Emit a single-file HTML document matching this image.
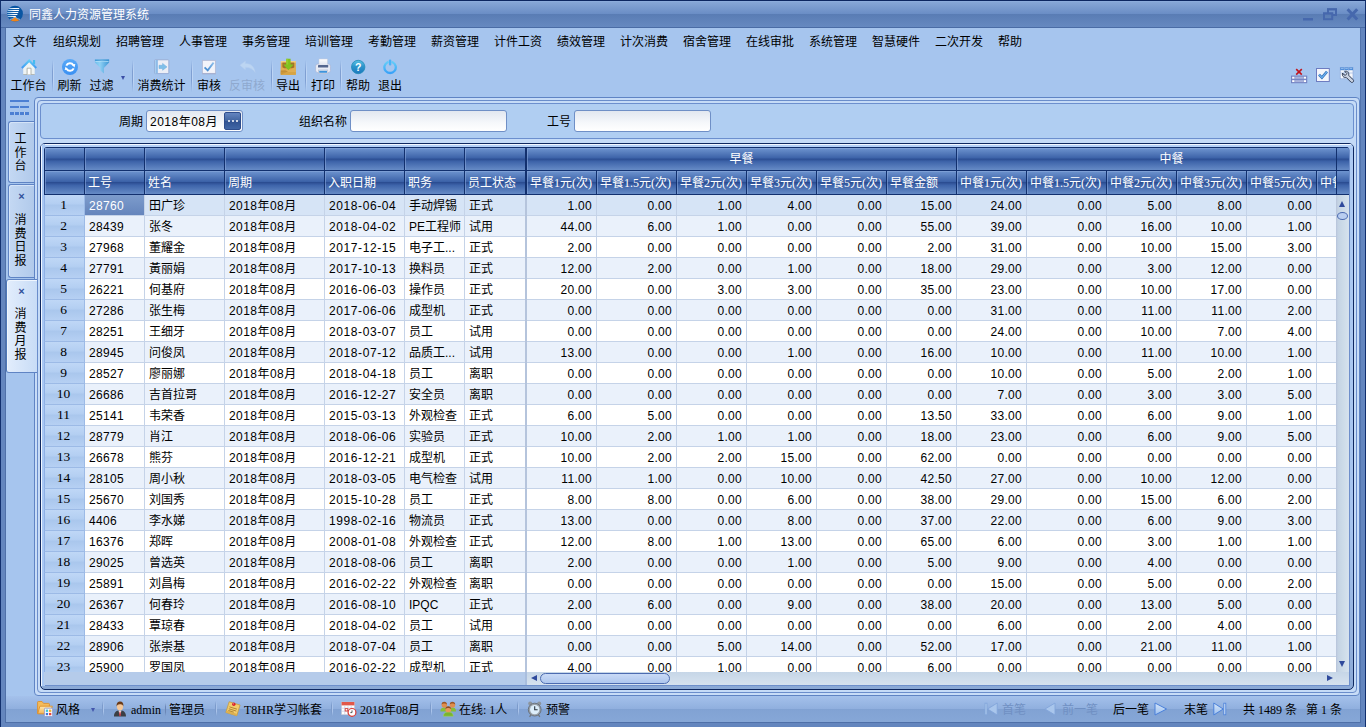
<!DOCTYPE html><html lang="zh-CN"><head><meta charset="utf-8"><title>同鑫人力资源管理系统</title><style>*{box-sizing:border-box;margin:0;padding:0}
html,body{width:1366px;height:727px;overflow:hidden;background:#6486BE}
body{font-family:"Liberation Sans","Noto Sans CJK SC",sans-serif;font-size:12px;color:#000;position:relative}
i,em,b,s,u,q{font-style:normal;font-weight:normal;text-decoration:none}
#win{position:absolute;left:0;top:0;width:1366px;height:727px;background:#6486BE;border-left:1px solid #12306E;border-right:1px solid #12306E;border-top:1px solid #0C2660;overflow:hidden}
#title{position:absolute;left:0;top:0;width:1364px;height:27px;background:linear-gradient(#92B2E1 0,#86A6D6 1px,#6A8DC5 13px,#597CB4 13px,#6689C0 26px,#4A6CA5 26px,#4A6CA5 27px)}
#title .logo{position:absolute;left:6px;top:4px;width:17px;height:18px}
#title .tt{position:absolute;left:28px;top:1px;height:27px;line-height:26px;color:#fff;font-size:12px;white-space:nowrap}
#title .wc{position:absolute;left:1296px;top:5px;width:64px;height:18px}
#client{position:absolute;left:4px;top:27px;width:1356px;height:695px;background:#A6C5EE;border-left:1px solid #4F70A8;border-right:1px solid #5274AD}
#client>*{position:absolute}
#menu{left:0;top:0;width:1354px;height:26px}
#menu span{position:absolute;top:1px;height:26px;line-height:26px;white-space:nowrap;margin-left:0}
#tb{left:0;top:0;width:1354px;height:69px;pointer-events:none}
#tb>*{position:absolute}
.ti{display:block;width:18px;height:18px}
.tl{top:50px;width:60px;height:16px;line-height:16px;white-space:nowrap;text-align:center}
.tl.dis{color:#8FA9CF}
#tb s{top:32px;width:2px;height:32px;background:linear-gradient(90deg,#7F9FD2 0,#7F9FD2 1px,#BDD5F5 1px);-webkit-mask-image:linear-gradient(transparent,#000 35%,#000 65%,transparent);mask-image:linear-gradient(transparent,#000 35%,#000 65%,transparent)}
.dd{width:0;height:0;border-left:2.5px solid transparent;border-right:2.5px solid transparent;border-top:4px solid #3B4FA6;margin-top:-.5px}
.dd2{position:absolute;top:12px;width:0;height:0;border-left:2.5px solid transparent;border-right:2.5px solid transparent;border-top:4px solid #4356AC}
.ri{width:18px;height:18px}
#side{left:0;top:0;width:28px;height:667px}
#side>*{position:absolute}
.ham{left:4px;top:72px;width:19px;height:15px}
.ham u{position:absolute;background:#4B7FD3;height:2px}
.ham u:nth-child(1){left:0;top:0;width:19px;height:2px}
.ham u.l2{left:0;top:6px;width:9px}
.ham u.l2.b{left:10px}
.ham u.l3{top:12px;width:4px;height:3px}
.ham u.l3.a{left:0}.ham u.l3.b{left:5px}.ham u.l3.c{left:10px}.ham u.l3.d{left:15px}
.stab{left:2px;width:26px;border:1px solid #5F84C4;border-right:0;border-radius:3px 0 0 3px;background:linear-gradient(90deg,#C4D8F3,#B1CAEB);box-shadow:inset 1px 1px 0 #D5E4F8}
.stab.act{left:0;width:31px;background:linear-gradient(90deg,#E2EDFC,#C8DCF6);border-color:#5F84C4;border-left-color:#4F78B8;box-shadow:inset 1px 1px 0 #F0F6FE;border-right:0;border-radius:3px 0 0 3px;z-index:5}
.stab span{position:absolute;left:0;width:23px;text-align:center;line-height:13.5px;font-size:12px}
.stab.act span{left:2px}
.stab em{position:absolute;left:1px;top:6px;width:23px;text-align:center;font-size:11px;line-height:10px;color:#2F4F9A;font-weight:bold}
.stab.act em{left:3px}
#p1{left:28px;top:69px;width:1326px;height:599px;border:1px solid #5F84C4;border-radius:4px;background:#C7DCF7}
#p2{position:absolute;left:2px;top:2px;width:1320px;height:593px;border:1px solid #6A8DCB;border-radius:4px;background:#C5DBF7}
#fp{position:absolute;left:2px;top:2px;width:1314px;height:36px;border:1px solid #6C8FCE;border-radius:4px;background:#B0CEF2}
#fp label{position:absolute;top:8px;margin-left:0;height:21px;line-height:21px;white-space:nowrap}
.inp{position:absolute;top:6px;height:22px;border:1px solid #6F8FC6;border-radius:3px;background:linear-gradient(#E2E7F0,#F6F8FB 60%,#fff)}
.inp span{position:absolute;left:3px;top:1px;line-height:20px;white-space:nowrap;letter-spacing:.5px}
.eb{position:absolute;right:1px;top:1px;width:17px;height:18px;border:1px solid #2E4D8C;border-radius:2px;background:linear-gradient(#6485C0,#41649F 50%,#2F5190 50%,#4167A6)}
.eb q{position:absolute;top:7px;width:2px;height:2px;background:#fff;border-radius:1px}
.eb q:nth-child(1){left:3px}.eb q:nth-child(2){left:7px}.eb q:nth-child(3){left:11px}
#gb{position:absolute;left:2px;top:42px;width:1314px;height:547px;border:1px solid #0F2860;border-radius:5px;background:linear-gradient(#AECBF3 0,#A5C3EE 70%,#8BA9D6 100%);overflow:hidden}
#gb:before{content:"";position:absolute;left:0;top:0;width:1312px;height:3px;background:#B4D0F7;border-top:1px solid #F2F7FE}
#gb:after{content:"";position:absolute;left:0;top:0;width:3px;height:542px;background:#A9C8F4;border-left:1px solid #F2F7FE}
#gi{position:absolute;left:3px;top:3px;width:1305px;height:538px;background:#B7CDEB;overflow:hidden;z-index:2;border-radius:3px 3px 0 0;box-shadow:1px 1px 0 #6E8FCB}
#hd{position:absolute;left:0;top:0;width:1305px;height:48px;background:#12306E;overflow:hidden;font-family:"Liberation Serif","Noto Sans CJK SC",serif}
.h{position:absolute;color:#fff;overflow:hidden;white-space:nowrap;background:linear-gradient(#6E94CF 0,#3C62A8 46%,#2B4D92 50%,#3E64AA 62%,#668BC6 100%);box-shadow:inset 1px 1px 0 rgba(140,170,220,.55)}
.h span{position:absolute;left:3px;top:0;line-height:24px;font-size:12px}
.h.hc{text-align:center;line-height:23px;font-size:12px}
.fx{position:absolute;width:2px;background:#12306E}
.hcorner{position:absolute;left:1292px;top:0;width:13px;height:48px;background:#12306E}
.hcorner b{position:absolute;left:1px;width:12px;display:block;background:linear-gradient(#6E94CF 0,#3C62A8 46%,#2B4D92 50%,#3E64AA 62%,#668BC6 100%)}
#bd{position:absolute;left:0;top:48px;width:1292px;height:477px;background:#fff;overflow:hidden}
.r{position:absolute;left:0;width:1343px;height:21px;background:#fff}
.r.alt{background:#EAF1FB}
.r.sel{background:#D6E4F6}
.r>div{position:absolute;top:0;height:21px;line-height:22px;border-bottom:1px solid #C5D3E8;white-space:nowrap;overflow:hidden}
.c{padding-left:4px;border-right:0;box-shadow:1px 0 0 #C5D3E8}
.r>.c{overflow:visible}
.c.n{text-align:right;padding-right:4px;padding-left:0;letter-spacing:.3px}
.c.d{letter-spacing:.3px}
.c.dt{letter-spacing:.6px}
.c.pd{letter-spacing:.45px}
.ind{text-align:center;padding-right:2px;font-family:"Liberation Serif",serif;font-size:13.5px;line-height:19px !important;background:linear-gradient(#BFD7F6 0,#B4CFF2 42%,#AAC7ED 52%,#B6D0F3 100%);border-bottom:1px solid #9CBAE6 !important;border-left:1px solid #8EB0E6;box-shadow:1px 0 0 #9CBAE6}
.c.foc{background:linear-gradient(#7D9CCC,#6585BC);color:#fff}
.fx2{position:absolute;top:0;width:2px;height:477px;background:#B5C4DC}
#vs{position:absolute;left:1292px;top:48px;width:13px;height:477px;background:linear-gradient(90deg,#B7C3DA 0,#C4D3E4 2px,#CBDAE8 50%,#D6E2EE 100%)}
#vs i{position:absolute;display:block}
#vs .up{left:3px;top:6px;width:0;height:0;border-left:3.5px solid transparent;border-right:3.5px solid transparent;border-bottom:6px solid #2F4A9C}
#vs .dn{left:3px;top:466px;width:0;height:0;border-left:3.5px solid transparent;border-right:3.5px solid transparent;border-top:6px solid #2F4A9C}
#vs .th{left:1px;top:17px;width:11px;height:8px;border:1px solid #4C6BB0;border-radius:50%;background:#B9CEF0}
#hs{position:absolute;left:0;top:525px;width:1305px;height:13px;background:linear-gradient(#C6D6E7,#D6E2EF)}
#hs .hl{position:absolute;left:0;top:0;width:483px;height:13px;background:#B5CBEA;border-right:2px solid #A9BEDE}
#hs .tr{position:absolute;left:483px;top:0;width:810px;height:13px}
#hs i{position:absolute;display:block}
#hs .lf{left:4px;top:3px;width:0;height:0;border-top:3.5px solid transparent;border-bottom:3.5px solid transparent;border-right:6px solid #2F4A9C}
#hs .rt{left:800px;top:3px;width:0;height:0;border-top:3.5px solid transparent;border-bottom:3.5px solid transparent;border-left:6px solid #2F4A9C}
#hs .hth{left:13px;top:1px;width:130px;height:11px;border:1px solid #4C6BB0;border-radius:6px;background:linear-gradient(#C9DAF6,#AFC7EE)}
#sb{left:0;top:668px;width:1354px;height:27px;background:linear-gradient(#A4C1EB 0,#90AFDE 13px,#81A2D3 13px,#86A7D7 26px,#4F70A8 26px);font-family:"Liberation Serif","Noto Sans CJK SC",serif}
#sb>*{position:absolute}
.si{top:0;height:26px}
.si i{position:absolute;left:0;top:5px;width:16px;height:16px;display:block}
.si span{position:absolute;top:2px;line-height:25px;white-space:nowrap;font-size:12px}
.si span.dis{color:#7090C3}
#sb s{top:5px;width:2px;height:15px;background:linear-gradient(90deg,#7B9ACB 0,#7B9ACB 1px,#A9C3EA 1px);-webkit-mask-image:linear-gradient(transparent,#000 30%,#000 70%,transparent);mask-image:linear-gradient(transparent,#000 30%,#000 70%,transparent)}
#sb s.t{width:1px;background:#6B86B5;top:7px;height:13px}
svg{display:block}
q:before,q:after{content:none}
</style></head><body><div id="win"><div id="title"><div class="logo"><svg width="17" height="18" viewBox="0 0 17 18"><defs><clipPath id="lgc"><circle cx="8" cy="8.6" r="7.9"/></clipPath><clipPath id="lgs"><path d="M0,1 L12.3,1 C12.6,6 10.6,10.4 7.6,12.6 L0,13.5 Z"/></clipPath><linearGradient id="lgg" x1="0" x2="1" y1="0" y2="0"><stop offset="0" stop-color="#7FB6E6"/><stop offset=".55" stop-color="#fff"/></linearGradient></defs><g clip-path="url(#lgc)"><rect width="17" height="18" fill="#0A56A3"/><g clip-path="url(#lgs)" fill="url(#lgg)"><rect x="0" y="3" width="13" height="1.05"/><rect x="0" y="5" width="13" height="1.05"/><rect x="0" y="7" width="13" height="1.05"/><rect x="0" y="9" width="13" height="1.05"/><rect x="0" y="11" width="13" height="1.05"/></g><path d="M3,15.6 Q5.8,14.6 8,12 Q10.2,14.6 13,15.6 Q8,18.6 3,15.6Z" fill="#F0841A"/><path d="M2.6,14.6 Q6,14 8,11.8 Q10,14 13.4,14.6" fill="none" stroke="#fff" stroke-width=".7" opacity=".8"/></g></svg></div><span class="tt">同鑫人力资源管理系统</span><div class="wc"><svg width="64" height="18" viewBox="0 0 64 18"><rect x="6" y="12" width="10" height="2.5" fill="#4668AD"/><g fill="none" stroke="#4668AD"><path d="M31,7 V3.6 H39 V9 H36" stroke-width="2"/><path d="M30,2.9 H40" stroke-width="1.4"/><rect x="27" y="7.6" width="8.2" height="5.6" stroke-width="2"/><path d="M26,7 H36.2" stroke-width="1.2"/></g><path d="M50.6,3.2 L60.2,13.6 M60.2,3.2 L50.6,13.6" stroke="#4668AD" stroke-width="3" fill="none"/></svg></div></div><div id="client"><div id="menu"><span style="left:7px">文件</span><span style="left:47px">组织规划</span><span style="left:110px">招聘管理</span><span style="left:173px">人事管理</span><span style="left:236px">事务管理</span><span style="left:299px">培训管理</span><span style="left:362px">考勤管理</span><span style="left:425px">薪资管理</span><span style="left:488px">计件工资</span><span style="left:551px">绩效管理</span><span style="left:614px">计次消费</span><span style="left:677px">宿舍管理</span><span style="left:740px">在线审批</span><span style="left:803px">系统管理</span><span style="left:866px">智慧硬件</span><span style="left:929px">二次开发</span><span style="left:992px">帮助</span></div><div id="tb"><i class="ti" style="left:15px;top:31px"><svg width="16" height="16" viewBox="0 0 16 16"><defs><linearGradient id="hr" x1="0" x2="0" y1="0" y2="1"><stop offset="0" stop-color="#66D4F7"/><stop offset="1" stop-color="#3C94F2"/></linearGradient></defs><rect x="12" y="1" width="2.1" height="4.4" fill="#45BCEF"/><path d="M2.2,7 L8.2,1.6 L13.7,7 V15.6 H2.2Z" fill="#EEF3F3"/><path d="M2.2,15.1 H13.7 V15.8 H2.2Z" fill="#A9AA9E"/><path d="M6.1,15.4 V9.2 H10 V15.4" fill="#fff" stroke="#9FA39B" stroke-width=".8"/><path d="M0.1,8.2 L8.2,0.1 L16,8.2 L14.6,9.7 L8.2,3.2 L1.6,9.7Z" fill="url(#hr)"/></svg></i><b class="tl" style="left:-7.5px">工作台</b><i class="ti" style="left:56px;top:31px"><svg width="16" height="16" viewBox="0 0 16 16"><defs><linearGradient id="rf" x1="0" x2="0" y1="0" y2="1"><stop offset="0" stop-color="#58A9F8"/><stop offset="1" stop-color="#3A90F2"/></linearGradient></defs><circle cx="8" cy="8" r="8" fill="url(#rf)"/><g fill="none" stroke="#fff" stroke-width="1.9"><path d="M4.3,6.7 A4,4 0 0 1 11.4,6.2"/><path d="M11.7,9.3 A4,4 0 0 1 4.6,9.9"/></g><path d="M9.6,5.6 L13.3,5 L12.5,8.4Z M6.4,10.5 L2.7,11 L3.5,7.7Z" fill="#fff"/></svg></i><b class="tl" style="left:33.5px">刷新</b><i class="ti" style="left:88px;top:31px"><svg width="16" height="16" viewBox="0 0 16 16"><defs><linearGradient id="fl" x1="0" x2="1" y1="0" y2="0"><stop offset="0" stop-color="#6DBDEB"/><stop offset=".35" stop-color="#8FD0F4"/><stop offset="1" stop-color="#3F98D6"/></linearGradient></defs><path d="M0.9,0.6 H15.1 V3.4 L9.9,9 V14.4 L6.4,11.6 V9 L0.9,3.4Z" fill="url(#fl)"/><path d="M0.9,0.6 H15.1 V1.8 H0.9Z" fill="#3D93D2"/><path d="M1.4,2.6 Q8,1.6 14.6,2.6" stroke="#BFE6FB" stroke-width=".7" fill="none"/></svg></i><b class="tl" style="left:65.5px">过滤</b><i class="ti" style="left:148px;top:31px"><svg width="16" height="16" viewBox="0 0 16 16"><rect x="0.6" y="0.8" width="14.2" height="13.8" rx=".8" fill="#ECEEF6" stroke="#8EA3CE" stroke-width=".8"/><rect x="0.8" y="1" width="3" height="13.4" fill="#86B7E7"/><rect x="1" y="1" width="1.2" height="13.4" fill="#A8CDF0"/><path d="M5,6.3 H8.6 V4.4 L13,7.9 L8.6,11.3 V9.5 H5Z" fill="#7FBFE9" stroke="#6CADDD" stroke-width=".5"/></svg></i><b class="tl" style="left:125.5px">消费统计</b><i class="ti" style="left:195px;top:31px"><svg width="16" height="16" viewBox="0 0 16 16"><defs><linearGradient id="ck" x1="0" x2="1" y1="1" y2="0"><stop offset="0" stop-color="#3F86CC"/><stop offset="1" stop-color="#8FC0EC"/></linearGradient></defs><rect x="1.4" y="1.4" width="13" height="13" fill="#F3F4FA" stroke="#B4BCD6" stroke-width=".9"/><path d="M1.2,14.8 H14.8" stroke="#9CA6C8" stroke-width=".8"/><path d="M3.6,8.4 L6.7,11.4 L12.6,3.6" fill="none" stroke="url(#ck)" stroke-width="1.8"/></svg></i><b class="tl" style="left:173.0px">审核</b><i class="ti" style="left:233px;top:31px"><svg width="17" height="16" viewBox="0 0 17 16"><path d="M0.8,6.2 L6.4,2 V4.6 C11.5,4.4 15.6,7.6 16.2,13.6 C13.8,9.6 10.6,8.2 6.4,8.4 V10.8Z" fill="#BCD5F2" stroke="#B2CDEE" stroke-width=".5"/></svg></i><b class="tl dis" style="left:211.0px">反审核</b><i class="ti" style="left:274px;top:30px"><svg width="17" height="18" viewBox="0 0 17 18"><rect x="0.8" y="3" width="15" height="13.8" rx=".8" fill="#DDA748"/><rect x="0.8" y="3" width="15" height="1.6" fill="#F3CF86"/><rect x="2.4" y="4.6" width="11.8" height="5.6" fill="#A1722A"/><path d="M0.8,9.6 L3,9.6 L5,11.4 H11 L14,9.6 H15.8 V16.8 H0.8Z" fill="#E0AE52"/><path d="M0.8,12.6 L5.2,12.2 L8,13.4 L0.8,16.8Z" fill="#C48F35"/><path d="M0.8,14 H15.8 V16.8 H0.8Z" fill="#D19C3C" opacity=".6"/><path d="M6.2,0.8 H10.6 V6.6 H13.6 L8.4,12.2 L3.2,6.6 H6.2Z" fill="#82C21E"/><path d="M6.2,0.8 H8.2 V6.6 H6.2Z" fill="#95D133" opacity=".7"/></svg></i><b class="tl" style="left:252.0px">导出</b><i class="ti" style="left:309px;top:30px"><svg width="16" height="17" viewBox="0 0 16 17"><defs><linearGradient id="pp" x1="0" x2="0" y1="0" y2="1"><stop offset="0" stop-color="#fff"/><stop offset="1" stop-color="#DDE3EE"/></linearGradient></defs><rect x="0.6" y="6" width="14.8" height="8.6" rx="2.2" fill="#E9EDF6" stroke="#A9B5D5" stroke-width=".7"/><rect x="4" y="1" width="8.4" height="6.4" fill="url(#pp)" stroke="#C5CCDC" stroke-width=".5"/><rect x="3" y="7" width="10.2" height="2.6" rx=".6" fill="#54678F"/><rect x="3.4" y="12" width="9.4" height="3.6" fill="#EEF2F8" stroke="#AAB4CC" stroke-width=".6"/><rect x="4.2" y="12.8" width="7.8" height="2" fill="#3D93DB"/></svg></i><b class="tl" style="left:287.0px">打印</b><i class="ti" style="left:345px;top:31px"><svg width="15" height="16" viewBox="0 0 15 16"><defs><linearGradient id="hp" x1="0" x2="0" y1="0" y2="1"><stop offset="0" stop-color="#5CC2E4"/><stop offset=".45" stop-color="#2C96CC"/><stop offset="1" stop-color="#1B78BE"/></linearGradient></defs><circle cx="7.2" cy="8" r="6.7" fill="url(#hp)" stroke="#1F8AB8" stroke-width=".8"/><text x="7.2" y="11.9" text-anchor="middle" font-family="Liberation Sans,sans-serif" font-weight="bold" font-size="10.5" fill="#fff">?</text></svg></i><b class="tl" style="left:322.0px">帮助</b><i class="ti" style="left:377px;top:31px"><svg width="15" height="16" viewBox="0 0 15 16"><defs><linearGradient id="pw" x1="0" x2="0" y1="0" y2="1"><stop offset="0" stop-color="#62CCF8"/><stop offset="1" stop-color="#38A2F8"/></linearGradient></defs><path d="M4.6,3.2 A5.7,5.7 0 1 0 9.6,3.2" fill="none" stroke="url(#pw)" stroke-width="2.3" stroke-linecap="round"/><rect x="5.9" y="0.4" width="2.4" height="6.2" rx="1.1" fill="#48B4F8"/></svg></i><b class="tl" style="left:354.0px">退出</b><s style="left:46px"></s><s style="left:126px"></s><s style="left:185px"></s><s style="left:265px"></s><s style="left:299px"></s><s style="left:334px"></s><em class="dd" style="left:115px;top:48px"></em><div class="ri" style="left:1285px;top:39px"><svg width="18" height="18" viewBox="0 0 18 18"><path d="M5.2,2.2 L10.8,7.6 M10.8,2.2 L5.2,7.6" stroke="#C0141C" stroke-width="1.6"/><rect x="0.4" y="9" width="15.4" height="6.8" fill="#8E9BCE" stroke="#6F7EBE" stroke-width=".8"/><path d="M0.4,12.4 H15.8" stroke="#6F7EBE" stroke-width=".8"/><g fill="#fff"><rect x="1.2" y="9.8" width="2.2" height="1.8"/><rect x="12.8" y="9.8" width="2.2" height="1.8"/><rect x="1.2" y="13.2" width="2.2" height="1.8"/><rect x="12.8" y="13.2" width="2.2" height="1.8"/></g><g fill="#A9B3DC"><rect x="4.2" y="9.8" width="7.8" height="1.8"/><rect x="4.2" y="13.2" width="7.8" height="1.8"/></g></svg></div><div class="ri" style="left:1309px;top:39px"><svg width="18" height="18" viewBox="0 0 18 18"><rect x="1.5" y="1.5" width="12.8" height="13" fill="#F4F5FB" stroke="#6D7CC0" stroke-width="1"/><path d="M4,7.6 L6.9,10.6 L12,4.6" fill="none" stroke="#2F6DB8" stroke-width="2.6"/><path d="M4,7.6 L6.9,10.6 L12,4.6" fill="none" stroke="#6FB1EE" stroke-width="1.3"/></svg></div><div class="ri" style="left:1333px;top:39px"><svg width="18" height="18" viewBox="0 0 18 18"><rect x="1.2" y="0.4" width="12.8" height="11.4" fill="#F4F7FC" stroke="#8AA4D6" stroke-width=".6"/><rect x="1.2" y="0.4" width="12.8" height="2.8" fill="#4A8AD8"/><path d="M5.4,0.4 V11.8 M9.7,0.4 V11.8 M1.2,6 H14" stroke="#9DB7E2" stroke-width=".7"/><g fill="#9CC4F0"><rect x="2" y="1.2" width="2.6" height=".9"/><rect x="6.2" y="1.2" width="2.6" height=".9"/><rect x="10.6" y="1.2" width="2.6" height=".9"/></g><path d="M3.6,6 C2.6,8.6 4.6,11 7.2,10.4 L11.8,15 C13.2,16.4 15.6,14.4 14.2,12.8 L9.6,8.2 C10.4,5.6 8.2,3.6 5.8,4.4 L7.8,6.6 L6.6,8.2 L5.2,8 Z" fill="#C9D2E2" stroke="#2F3C55" stroke-width="1"/></svg></div></div><div id="side"><div class="ham"><u></u><u class="l2"></u><u class="l2 b"></u><u class="l3 a"></u><u class="l3 b"></u><u class="l3 c"></u><u class="l3 d"></u></div><div class="stab" style="top:93px;height:62px"><span style="top:11px">工<br>作<br>台</span></div><div class="stab" style="top:156px;height:94px"><em>×</em><span style="top:29px">消<br>费<br>日<br>报</span></div><div class="stab act" style="top:251px;height:94px"><em>×</em><span style="top:28px">消<br>费<br>月<br>报</span></div></div><div id="p1"><div id="p2"><div id="fp"><label style="left:78px">周期</label><div class="inp" style="left:105px;width:97px"><span>2018年08月</span><div class="eb"><q></q><q></q><q></q></div></div><label style="left:258px">组织名称</label><div class="inp" style="left:309px;width:157px"></div><label style="left:506px">工号</label><div class="inp" style="left:533px;width:137px"></div></div><div id="gb"><div id="gi"><div id="hd"><div class="h" style="left:1px;top:1px;width:39px;height:22px"></div><div class="h" style="left:41px;top:1px;width:59px;height:22px"></div><div class="h" style="left:101px;top:1px;width:79px;height:22px"></div><div class="h" style="left:181px;top:1px;width:99px;height:22px"></div><div class="h" style="left:281px;top:1px;width:79px;height:22px"></div><div class="h" style="left:361px;top:1px;width:59px;height:22px"></div><div class="h" style="left:421px;top:1px;width:61px;height:22px"></div><div class="h hc" style="left:483px;top:1px;width:429px;height:22px">早餐</div><div class="h hc" style="left:913px;top:1px;width:429px;height:22px">中餐</div><div class="h" style="left:1px;top:24px;width:39px;height:23px"></div><div class="h" style="left:41px;top:24px;width:59px;height:23px"><span>工号</span></div><div class="h" style="left:101px;top:24px;width:79px;height:23px"><span>姓名</span></div><div class="h" style="left:181px;top:24px;width:99px;height:23px"><span>周期</span></div><div class="h" style="left:281px;top:24px;width:79px;height:23px"><span>入职日期</span></div><div class="h" style="left:361px;top:24px;width:59px;height:23px"><span>职务</span></div><div class="h" style="left:421px;top:24px;width:61px;height:23px"><span>员工状态</span></div><div class="h" style="left:483px;top:24px;width:69px;height:23px"><span>早餐1元(次)</span></div><div class="h" style="left:553px;top:24px;width:79px;height:23px"><span>早餐1.5元(次)</span></div><div class="h" style="left:633px;top:24px;width:69px;height:23px"><span>早餐2元(次)</span></div><div class="h" style="left:703px;top:24px;width:69px;height:23px"><span>早餐3元(次)</span></div><div class="h" style="left:773px;top:24px;width:69px;height:23px"><span>早餐5元(次)</span></div><div class="h" style="left:843px;top:24px;width:69px;height:23px"><span>早餐金额</span></div><div class="h" style="left:913px;top:24px;width:69px;height:23px"><span>中餐1元(次)</span></div><div class="h" style="left:983px;top:24px;width:79px;height:23px"><span>中餐1.5元(次)</span></div><div class="h" style="left:1063px;top:24px;width:69px;height:23px"><span>中餐2元(次)</span></div><div class="h" style="left:1133px;top:24px;width:69px;height:23px"><span>中餐3元(次)</span></div><div class="h" style="left:1203px;top:24px;width:69px;height:23px"><span>中餐5元(次)</span></div><div class="h" style="left:1273px;top:24px;width:69px;height:23px"><span>中餐金额</span></div><div class="fx" style="left:481px;top:0;height:48px"></div><div class="hcorner"><b style="top:1px;height:22px"></b><b style="top:24px;height:23px"></b></div></div><div id="bd"><div class="r sel" style="top:0px"><div class="ind" style="left:0;width:40px">1</div><div class="c d foc" style="left:41px;width:59px">28760</div><div class="c" style="left:101px;width:79px">田广珍</div><div class="c pd" style="left:181px;width:99px">2018年08月</div><div class="c dt" style="left:281px;width:79px">2018-06-04</div><div class="c" style="left:361px;width:59px">手动焊锡</div><div class="c" style="left:421px;width:61px">正式</div><div class="c n" style="left:483px;width:69px">1.00</div><div class="c n" style="left:553px;width:79px">0.00</div><div class="c n" style="left:633px;width:69px">1.00</div><div class="c n" style="left:703px;width:69px">4.00</div><div class="c n" style="left:773px;width:69px">0.00</div><div class="c n" style="left:843px;width:69px">15.00</div><div class="c n" style="left:913px;width:69px">24.00</div><div class="c n" style="left:983px;width:79px">0.00</div><div class="c n" style="left:1063px;width:69px">5.00</div><div class="c n" style="left:1133px;width:69px">8.00</div><div class="c n" style="left:1203px;width:69px">0.00</div><div class="c n" style="left:1273px;width:69px"></div></div><div class="r alt" style="top:21px"><div class="ind" style="left:0;width:40px">2</div><div class="c d" style="left:41px;width:59px">28439</div><div class="c" style="left:101px;width:79px">张冬</div><div class="c pd" style="left:181px;width:99px">2018年08月</div><div class="c dt" style="left:281px;width:79px">2018-04-02</div><div class="c" style="left:361px;width:59px">PE工程师</div><div class="c" style="left:421px;width:61px">试用</div><div class="c n" style="left:483px;width:69px">44.00</div><div class="c n" style="left:553px;width:79px">6.00</div><div class="c n" style="left:633px;width:69px">1.00</div><div class="c n" style="left:703px;width:69px">0.00</div><div class="c n" style="left:773px;width:69px">0.00</div><div class="c n" style="left:843px;width:69px">55.00</div><div class="c n" style="left:913px;width:69px">39.00</div><div class="c n" style="left:983px;width:79px">0.00</div><div class="c n" style="left:1063px;width:69px">16.00</div><div class="c n" style="left:1133px;width:69px">10.00</div><div class="c n" style="left:1203px;width:69px">1.00</div><div class="c n" style="left:1273px;width:69px"></div></div><div class="r" style="top:42px"><div class="ind" style="left:0;width:40px">3</div><div class="c d" style="left:41px;width:59px">27968</div><div class="c" style="left:101px;width:79px">董耀金</div><div class="c pd" style="left:181px;width:99px">2018年08月</div><div class="c dt" style="left:281px;width:79px">2017-12-15</div><div class="c" style="left:361px;width:59px">电子工...</div><div class="c" style="left:421px;width:61px">正式</div><div class="c n" style="left:483px;width:69px">2.00</div><div class="c n" style="left:553px;width:79px">0.00</div><div class="c n" style="left:633px;width:69px">0.00</div><div class="c n" style="left:703px;width:69px">0.00</div><div class="c n" style="left:773px;width:69px">0.00</div><div class="c n" style="left:843px;width:69px">2.00</div><div class="c n" style="left:913px;width:69px">31.00</div><div class="c n" style="left:983px;width:79px">0.00</div><div class="c n" style="left:1063px;width:69px">10.00</div><div class="c n" style="left:1133px;width:69px">15.00</div><div class="c n" style="left:1203px;width:69px">3.00</div><div class="c n" style="left:1273px;width:69px"></div></div><div class="r alt" style="top:63px"><div class="ind" style="left:0;width:40px">4</div><div class="c d" style="left:41px;width:59px">27791</div><div class="c" style="left:101px;width:79px">黃丽娟</div><div class="c pd" style="left:181px;width:99px">2018年08月</div><div class="c dt" style="left:281px;width:79px">2017-10-13</div><div class="c" style="left:361px;width:59px">换料员</div><div class="c" style="left:421px;width:61px">正式</div><div class="c n" style="left:483px;width:69px">12.00</div><div class="c n" style="left:553px;width:79px">2.00</div><div class="c n" style="left:633px;width:69px">0.00</div><div class="c n" style="left:703px;width:69px">1.00</div><div class="c n" style="left:773px;width:69px">0.00</div><div class="c n" style="left:843px;width:69px">18.00</div><div class="c n" style="left:913px;width:69px">29.00</div><div class="c n" style="left:983px;width:79px">0.00</div><div class="c n" style="left:1063px;width:69px">3.00</div><div class="c n" style="left:1133px;width:69px">12.00</div><div class="c n" style="left:1203px;width:69px">0.00</div><div class="c n" style="left:1273px;width:69px"></div></div><div class="r" style="top:84px"><div class="ind" style="left:0;width:40px">5</div><div class="c d" style="left:41px;width:59px">26221</div><div class="c" style="left:101px;width:79px">何基府</div><div class="c pd" style="left:181px;width:99px">2018年08月</div><div class="c dt" style="left:281px;width:79px">2016-06-03</div><div class="c" style="left:361px;width:59px">操作员</div><div class="c" style="left:421px;width:61px">正式</div><div class="c n" style="left:483px;width:69px">20.00</div><div class="c n" style="left:553px;width:79px">0.00</div><div class="c n" style="left:633px;width:69px">3.00</div><div class="c n" style="left:703px;width:69px">3.00</div><div class="c n" style="left:773px;width:69px">0.00</div><div class="c n" style="left:843px;width:69px">35.00</div><div class="c n" style="left:913px;width:69px">23.00</div><div class="c n" style="left:983px;width:79px">0.00</div><div class="c n" style="left:1063px;width:69px">10.00</div><div class="c n" style="left:1133px;width:69px">17.00</div><div class="c n" style="left:1203px;width:69px">0.00</div><div class="c n" style="left:1273px;width:69px"></div></div><div class="r alt" style="top:105px"><div class="ind" style="left:0;width:40px">6</div><div class="c d" style="left:41px;width:59px">27286</div><div class="c" style="left:101px;width:79px">张生梅</div><div class="c pd" style="left:181px;width:99px">2018年08月</div><div class="c dt" style="left:281px;width:79px">2017-06-06</div><div class="c" style="left:361px;width:59px">成型机</div><div class="c" style="left:421px;width:61px">正式</div><div class="c n" style="left:483px;width:69px">0.00</div><div class="c n" style="left:553px;width:79px">0.00</div><div class="c n" style="left:633px;width:69px">0.00</div><div class="c n" style="left:703px;width:69px">0.00</div><div class="c n" style="left:773px;width:69px">0.00</div><div class="c n" style="left:843px;width:69px">0.00</div><div class="c n" style="left:913px;width:69px">31.00</div><div class="c n" style="left:983px;width:79px">0.00</div><div class="c n" style="left:1063px;width:69px">11.00</div><div class="c n" style="left:1133px;width:69px">11.00</div><div class="c n" style="left:1203px;width:69px">2.00</div><div class="c n" style="left:1273px;width:69px"></div></div><div class="r" style="top:126px"><div class="ind" style="left:0;width:40px">7</div><div class="c d" style="left:41px;width:59px">28251</div><div class="c" style="left:101px;width:79px">王细牙</div><div class="c pd" style="left:181px;width:99px">2018年08月</div><div class="c dt" style="left:281px;width:79px">2018-03-07</div><div class="c" style="left:361px;width:59px">员工</div><div class="c" style="left:421px;width:61px">试用</div><div class="c n" style="left:483px;width:69px">0.00</div><div class="c n" style="left:553px;width:79px">0.00</div><div class="c n" style="left:633px;width:69px">0.00</div><div class="c n" style="left:703px;width:69px">0.00</div><div class="c n" style="left:773px;width:69px">0.00</div><div class="c n" style="left:843px;width:69px">0.00</div><div class="c n" style="left:913px;width:69px">24.00</div><div class="c n" style="left:983px;width:79px">0.00</div><div class="c n" style="left:1063px;width:69px">10.00</div><div class="c n" style="left:1133px;width:69px">7.00</div><div class="c n" style="left:1203px;width:69px">4.00</div><div class="c n" style="left:1273px;width:69px"></div></div><div class="r alt" style="top:147px"><div class="ind" style="left:0;width:40px">8</div><div class="c d" style="left:41px;width:59px">28945</div><div class="c" style="left:101px;width:79px">问俊凤</div><div class="c pd" style="left:181px;width:99px">2018年08月</div><div class="c dt" style="left:281px;width:79px">2018-07-12</div><div class="c" style="left:361px;width:59px">品质工...</div><div class="c" style="left:421px;width:61px">试用</div><div class="c n" style="left:483px;width:69px">13.00</div><div class="c n" style="left:553px;width:79px">0.00</div><div class="c n" style="left:633px;width:69px">0.00</div><div class="c n" style="left:703px;width:69px">1.00</div><div class="c n" style="left:773px;width:69px">0.00</div><div class="c n" style="left:843px;width:69px">16.00</div><div class="c n" style="left:913px;width:69px">10.00</div><div class="c n" style="left:983px;width:79px">0.00</div><div class="c n" style="left:1063px;width:69px">11.00</div><div class="c n" style="left:1133px;width:69px">10.00</div><div class="c n" style="left:1203px;width:69px">1.00</div><div class="c n" style="left:1273px;width:69px"></div></div><div class="r" style="top:168px"><div class="ind" style="left:0;width:40px">9</div><div class="c d" style="left:41px;width:59px">28527</div><div class="c" style="left:101px;width:79px">廖丽娜</div><div class="c pd" style="left:181px;width:99px">2018年08月</div><div class="c dt" style="left:281px;width:79px">2018-04-18</div><div class="c" style="left:361px;width:59px">员工</div><div class="c" style="left:421px;width:61px">离职</div><div class="c n" style="left:483px;width:69px">0.00</div><div class="c n" style="left:553px;width:79px">0.00</div><div class="c n" style="left:633px;width:69px">0.00</div><div class="c n" style="left:703px;width:69px">0.00</div><div class="c n" style="left:773px;width:69px">0.00</div><div class="c n" style="left:843px;width:69px">0.00</div><div class="c n" style="left:913px;width:69px">10.00</div><div class="c n" style="left:983px;width:79px">0.00</div><div class="c n" style="left:1063px;width:69px">5.00</div><div class="c n" style="left:1133px;width:69px">2.00</div><div class="c n" style="left:1203px;width:69px">1.00</div><div class="c n" style="left:1273px;width:69px"></div></div><div class="r alt" style="top:189px"><div class="ind" style="left:0;width:40px">10</div><div class="c d" style="left:41px;width:59px">26686</div><div class="c" style="left:101px;width:79px">吉首拉哥</div><div class="c pd" style="left:181px;width:99px">2018年08月</div><div class="c dt" style="left:281px;width:79px">2016-12-27</div><div class="c" style="left:361px;width:59px">安全员</div><div class="c" style="left:421px;width:61px">离职</div><div class="c n" style="left:483px;width:69px">0.00</div><div class="c n" style="left:553px;width:79px">0.00</div><div class="c n" style="left:633px;width:69px">0.00</div><div class="c n" style="left:703px;width:69px">0.00</div><div class="c n" style="left:773px;width:69px">0.00</div><div class="c n" style="left:843px;width:69px">0.00</div><div class="c n" style="left:913px;width:69px">7.00</div><div class="c n" style="left:983px;width:79px">0.00</div><div class="c n" style="left:1063px;width:69px">3.00</div><div class="c n" style="left:1133px;width:69px">3.00</div><div class="c n" style="left:1203px;width:69px">5.00</div><div class="c n" style="left:1273px;width:69px"></div></div><div class="r" style="top:210px"><div class="ind" style="left:0;width:40px">11</div><div class="c d" style="left:41px;width:59px">25141</div><div class="c" style="left:101px;width:79px">韦荣香</div><div class="c pd" style="left:181px;width:99px">2018年08月</div><div class="c dt" style="left:281px;width:79px">2015-03-13</div><div class="c" style="left:361px;width:59px">外观检查</div><div class="c" style="left:421px;width:61px">正式</div><div class="c n" style="left:483px;width:69px">6.00</div><div class="c n" style="left:553px;width:79px">5.00</div><div class="c n" style="left:633px;width:69px">0.00</div><div class="c n" style="left:703px;width:69px">0.00</div><div class="c n" style="left:773px;width:69px">0.00</div><div class="c n" style="left:843px;width:69px">13.50</div><div class="c n" style="left:913px;width:69px">33.00</div><div class="c n" style="left:983px;width:79px">0.00</div><div class="c n" style="left:1063px;width:69px">6.00</div><div class="c n" style="left:1133px;width:69px">9.00</div><div class="c n" style="left:1203px;width:69px">1.00</div><div class="c n" style="left:1273px;width:69px"></div></div><div class="r alt" style="top:231px"><div class="ind" style="left:0;width:40px">12</div><div class="c d" style="left:41px;width:59px">28779</div><div class="c" style="left:101px;width:79px">肖江</div><div class="c pd" style="left:181px;width:99px">2018年08月</div><div class="c dt" style="left:281px;width:79px">2018-06-06</div><div class="c" style="left:361px;width:59px">实验员</div><div class="c" style="left:421px;width:61px">正式</div><div class="c n" style="left:483px;width:69px">10.00</div><div class="c n" style="left:553px;width:79px">2.00</div><div class="c n" style="left:633px;width:69px">1.00</div><div class="c n" style="left:703px;width:69px">1.00</div><div class="c n" style="left:773px;width:69px">0.00</div><div class="c n" style="left:843px;width:69px">18.00</div><div class="c n" style="left:913px;width:69px">23.00</div><div class="c n" style="left:983px;width:79px">0.00</div><div class="c n" style="left:1063px;width:69px">6.00</div><div class="c n" style="left:1133px;width:69px">9.00</div><div class="c n" style="left:1203px;width:69px">5.00</div><div class="c n" style="left:1273px;width:69px"></div></div><div class="r" style="top:252px"><div class="ind" style="left:0;width:40px">13</div><div class="c d" style="left:41px;width:59px">26678</div><div class="c" style="left:101px;width:79px">熊芬</div><div class="c pd" style="left:181px;width:99px">2018年08月</div><div class="c dt" style="left:281px;width:79px">2016-12-21</div><div class="c" style="left:361px;width:59px">成型机</div><div class="c" style="left:421px;width:61px">正式</div><div class="c n" style="left:483px;width:69px">10.00</div><div class="c n" style="left:553px;width:79px">2.00</div><div class="c n" style="left:633px;width:69px">2.00</div><div class="c n" style="left:703px;width:69px">15.00</div><div class="c n" style="left:773px;width:69px">0.00</div><div class="c n" style="left:843px;width:69px">62.00</div><div class="c n" style="left:913px;width:69px">0.00</div><div class="c n" style="left:983px;width:79px">0.00</div><div class="c n" style="left:1063px;width:69px">0.00</div><div class="c n" style="left:1133px;width:69px">0.00</div><div class="c n" style="left:1203px;width:69px">0.00</div><div class="c n" style="left:1273px;width:69px"></div></div><div class="r alt" style="top:273px"><div class="ind" style="left:0;width:40px">14</div><div class="c d" style="left:41px;width:59px">28105</div><div class="c" style="left:101px;width:79px">周小秋</div><div class="c pd" style="left:181px;width:99px">2018年08月</div><div class="c dt" style="left:281px;width:79px">2018-03-05</div><div class="c" style="left:361px;width:59px">电气检查</div><div class="c" style="left:421px;width:61px">试用</div><div class="c n" style="left:483px;width:69px">11.00</div><div class="c n" style="left:553px;width:79px">1.00</div><div class="c n" style="left:633px;width:69px">0.00</div><div class="c n" style="left:703px;width:69px">10.00</div><div class="c n" style="left:773px;width:69px">0.00</div><div class="c n" style="left:843px;width:69px">42.50</div><div class="c n" style="left:913px;width:69px">27.00</div><div class="c n" style="left:983px;width:79px">0.00</div><div class="c n" style="left:1063px;width:69px">10.00</div><div class="c n" style="left:1133px;width:69px">12.00</div><div class="c n" style="left:1203px;width:69px">0.00</div><div class="c n" style="left:1273px;width:69px"></div></div><div class="r" style="top:294px"><div class="ind" style="left:0;width:40px">15</div><div class="c d" style="left:41px;width:59px">25670</div><div class="c" style="left:101px;width:79px">刘国秀</div><div class="c pd" style="left:181px;width:99px">2018年08月</div><div class="c dt" style="left:281px;width:79px">2015-10-28</div><div class="c" style="left:361px;width:59px">员工</div><div class="c" style="left:421px;width:61px">正式</div><div class="c n" style="left:483px;width:69px">8.00</div><div class="c n" style="left:553px;width:79px">8.00</div><div class="c n" style="left:633px;width:69px">0.00</div><div class="c n" style="left:703px;width:69px">6.00</div><div class="c n" style="left:773px;width:69px">0.00</div><div class="c n" style="left:843px;width:69px">38.00</div><div class="c n" style="left:913px;width:69px">29.00</div><div class="c n" style="left:983px;width:79px">0.00</div><div class="c n" style="left:1063px;width:69px">15.00</div><div class="c n" style="left:1133px;width:69px">6.00</div><div class="c n" style="left:1203px;width:69px">2.00</div><div class="c n" style="left:1273px;width:69px"></div></div><div class="r alt" style="top:315px"><div class="ind" style="left:0;width:40px">16</div><div class="c d" style="left:41px;width:59px">4406</div><div class="c" style="left:101px;width:79px">李水娣</div><div class="c pd" style="left:181px;width:99px">2018年08月</div><div class="c dt" style="left:281px;width:79px">1998-02-16</div><div class="c" style="left:361px;width:59px">物流员</div><div class="c" style="left:421px;width:61px">正式</div><div class="c n" style="left:483px;width:69px">13.00</div><div class="c n" style="left:553px;width:79px">0.00</div><div class="c n" style="left:633px;width:69px">0.00</div><div class="c n" style="left:703px;width:69px">8.00</div><div class="c n" style="left:773px;width:69px">0.00</div><div class="c n" style="left:843px;width:69px">37.00</div><div class="c n" style="left:913px;width:69px">22.00</div><div class="c n" style="left:983px;width:79px">0.00</div><div class="c n" style="left:1063px;width:69px">6.00</div><div class="c n" style="left:1133px;width:69px">9.00</div><div class="c n" style="left:1203px;width:69px">3.00</div><div class="c n" style="left:1273px;width:69px"></div></div><div class="r" style="top:336px"><div class="ind" style="left:0;width:40px">17</div><div class="c d" style="left:41px;width:59px">16376</div><div class="c" style="left:101px;width:79px">郑晖</div><div class="c pd" style="left:181px;width:99px">2018年08月</div><div class="c dt" style="left:281px;width:79px">2008-01-08</div><div class="c" style="left:361px;width:59px">外观检查</div><div class="c" style="left:421px;width:61px">正式</div><div class="c n" style="left:483px;width:69px">12.00</div><div class="c n" style="left:553px;width:79px">8.00</div><div class="c n" style="left:633px;width:69px">1.00</div><div class="c n" style="left:703px;width:69px">13.00</div><div class="c n" style="left:773px;width:69px">0.00</div><div class="c n" style="left:843px;width:69px">65.00</div><div class="c n" style="left:913px;width:69px">6.00</div><div class="c n" style="left:983px;width:79px">0.00</div><div class="c n" style="left:1063px;width:69px">3.00</div><div class="c n" style="left:1133px;width:69px">1.00</div><div class="c n" style="left:1203px;width:69px">1.00</div><div class="c n" style="left:1273px;width:69px"></div></div><div class="r alt" style="top:357px"><div class="ind" style="left:0;width:40px">18</div><div class="c d" style="left:41px;width:59px">29025</div><div class="c" style="left:101px;width:79px">曾选英</div><div class="c pd" style="left:181px;width:99px">2018年08月</div><div class="c dt" style="left:281px;width:79px">2018-08-06</div><div class="c" style="left:361px;width:59px">员工</div><div class="c" style="left:421px;width:61px">离职</div><div class="c n" style="left:483px;width:69px">2.00</div><div class="c n" style="left:553px;width:79px">0.00</div><div class="c n" style="left:633px;width:69px">0.00</div><div class="c n" style="left:703px;width:69px">1.00</div><div class="c n" style="left:773px;width:69px">0.00</div><div class="c n" style="left:843px;width:69px">5.00</div><div class="c n" style="left:913px;width:69px">9.00</div><div class="c n" style="left:983px;width:79px">0.00</div><div class="c n" style="left:1063px;width:69px">4.00</div><div class="c n" style="left:1133px;width:69px">0.00</div><div class="c n" style="left:1203px;width:69px">0.00</div><div class="c n" style="left:1273px;width:69px"></div></div><div class="r" style="top:378px"><div class="ind" style="left:0;width:40px">19</div><div class="c d" style="left:41px;width:59px">25891</div><div class="c" style="left:101px;width:79px">刘昌梅</div><div class="c pd" style="left:181px;width:99px">2018年08月</div><div class="c dt" style="left:281px;width:79px">2016-02-22</div><div class="c" style="left:361px;width:59px">外观检查</div><div class="c" style="left:421px;width:61px">离职</div><div class="c n" style="left:483px;width:69px">0.00</div><div class="c n" style="left:553px;width:79px">0.00</div><div class="c n" style="left:633px;width:69px">0.00</div><div class="c n" style="left:703px;width:69px">0.00</div><div class="c n" style="left:773px;width:69px">0.00</div><div class="c n" style="left:843px;width:69px">0.00</div><div class="c n" style="left:913px;width:69px">15.00</div><div class="c n" style="left:983px;width:79px">0.00</div><div class="c n" style="left:1063px;width:69px">5.00</div><div class="c n" style="left:1133px;width:69px">0.00</div><div class="c n" style="left:1203px;width:69px">2.00</div><div class="c n" style="left:1273px;width:69px"></div></div><div class="r alt" style="top:399px"><div class="ind" style="left:0;width:40px">20</div><div class="c d" style="left:41px;width:59px">26367</div><div class="c" style="left:101px;width:79px">何春玲</div><div class="c pd" style="left:181px;width:99px">2018年08月</div><div class="c dt" style="left:281px;width:79px">2016-08-10</div><div class="c" style="left:361px;width:59px">IPQC</div><div class="c" style="left:421px;width:61px">正式</div><div class="c n" style="left:483px;width:69px">2.00</div><div class="c n" style="left:553px;width:79px">6.00</div><div class="c n" style="left:633px;width:69px">0.00</div><div class="c n" style="left:703px;width:69px">9.00</div><div class="c n" style="left:773px;width:69px">0.00</div><div class="c n" style="left:843px;width:69px">38.00</div><div class="c n" style="left:913px;width:69px">20.00</div><div class="c n" style="left:983px;width:79px">0.00</div><div class="c n" style="left:1063px;width:69px">13.00</div><div class="c n" style="left:1133px;width:69px">5.00</div><div class="c n" style="left:1203px;width:69px">0.00</div><div class="c n" style="left:1273px;width:69px"></div></div><div class="r" style="top:420px"><div class="ind" style="left:0;width:40px">21</div><div class="c d" style="left:41px;width:59px">28433</div><div class="c" style="left:101px;width:79px">覃琼春</div><div class="c pd" style="left:181px;width:99px">2018年08月</div><div class="c dt" style="left:281px;width:79px">2018-04-02</div><div class="c" style="left:361px;width:59px">员工</div><div class="c" style="left:421px;width:61px">试用</div><div class="c n" style="left:483px;width:69px">0.00</div><div class="c n" style="left:553px;width:79px">0.00</div><div class="c n" style="left:633px;width:69px">0.00</div><div class="c n" style="left:703px;width:69px">0.00</div><div class="c n" style="left:773px;width:69px">0.00</div><div class="c n" style="left:843px;width:69px">0.00</div><div class="c n" style="left:913px;width:69px">6.00</div><div class="c n" style="left:983px;width:79px">0.00</div><div class="c n" style="left:1063px;width:69px">2.00</div><div class="c n" style="left:1133px;width:69px">4.00</div><div class="c n" style="left:1203px;width:69px">0.00</div><div class="c n" style="left:1273px;width:69px"></div></div><div class="r alt" style="top:441px"><div class="ind" style="left:0;width:40px">22</div><div class="c d" style="left:41px;width:59px">28906</div><div class="c" style="left:101px;width:79px">张崇基</div><div class="c pd" style="left:181px;width:99px">2018年08月</div><div class="c dt" style="left:281px;width:79px">2018-07-04</div><div class="c" style="left:361px;width:59px">员工</div><div class="c" style="left:421px;width:61px">离职</div><div class="c n" style="left:483px;width:69px">0.00</div><div class="c n" style="left:553px;width:79px">0.00</div><div class="c n" style="left:633px;width:69px">5.00</div><div class="c n" style="left:703px;width:69px">14.00</div><div class="c n" style="left:773px;width:69px">0.00</div><div class="c n" style="left:843px;width:69px">52.00</div><div class="c n" style="left:913px;width:69px">17.00</div><div class="c n" style="left:983px;width:79px">0.00</div><div class="c n" style="left:1063px;width:69px">21.00</div><div class="c n" style="left:1133px;width:69px">11.00</div><div class="c n" style="left:1203px;width:69px">1.00</div><div class="c n" style="left:1273px;width:69px"></div></div><div class="r" style="top:462px"><div class="ind" style="left:0;width:40px">23</div><div class="c d" style="left:41px;width:59px">25900</div><div class="c" style="left:101px;width:79px">罗国凤</div><div class="c pd" style="left:181px;width:99px">2018年08月</div><div class="c dt" style="left:281px;width:79px">2016-02-22</div><div class="c" style="left:361px;width:59px">成型机</div><div class="c" style="left:421px;width:61px">正式</div><div class="c n" style="left:483px;width:69px">4.00</div><div class="c n" style="left:553px;width:79px">0.00</div><div class="c n" style="left:633px;width:69px">1.00</div><div class="c n" style="left:703px;width:69px">0.00</div><div class="c n" style="left:773px;width:69px">0.00</div><div class="c n" style="left:843px;width:69px">6.00</div><div class="c n" style="left:913px;width:69px">0.00</div><div class="c n" style="left:983px;width:79px">0.00</div><div class="c n" style="left:1063px;width:69px">0.00</div><div class="c n" style="left:1133px;width:69px">0.00</div><div class="c n" style="left:1203px;width:69px">0.00</div><div class="c n" style="left:1273px;width:69px"></div></div><div class="fx2" style="left:481px"></div></div><div id="vs"><i class="up"></i><i class="th"></i><i class="dn"></i></div><div id="hs"><div class="hl"></div><div class="tr"><i class="lf"></i><i class="hth"></i><i class="rt"></i></div></div></div></div></div></div><div id="sb"><div class="si" style="left:31px"><i><svg width="16" height="16" viewBox="0 0 16 16"><defs><linearGradient id="fd" x1="0" x2="0" y1="0" y2="1"><stop offset="0" stop-color="#FDE9B4"/><stop offset="1" stop-color="#F4B552"/></linearGradient></defs><path d="M0.6,12.6 V1.2 Q0.6,0.5 1.3,0.5 H5 L6.6,2.4 H11.6 Q12.4,2.4 12.4,3.2 V5.4" fill="#F3BC5C" stroke="#E0902A" stroke-width=".9"/><path d="M0.7,12.8 L2.9,5.2 H15.3 L13,12.8Z" fill="url(#fd)" stroke="#E0902A" stroke-width=".9"/><rect x="7.4" y="7.2" width="8.2" height="8.4" rx=".9" fill="#FBFBFE" stroke="#8C93C6" stroke-width=".8"/><rect x="8.8" y="8.6" width="2.3" height="2.3" fill="#3FC2D4"/><rect x="12" y="8.6" width="2.3" height="2.3" fill="#F0B030"/><rect x="8.8" y="11.9" width="2.3" height="2.3" fill="#3A78E0"/><rect x="12" y="11.9" width="2.3" height="2.3" fill="#E8453C"/></svg></i><span class="cj" style="left:19px">风格</span></div><em class="dd2" style="left:85px"></em><s style="left:96px"></s><div class="si" style="left:107px"><i><svg width="16" height="16" viewBox="0 0 16 16"><path d="M1,15.6 C1,11.6 3.2,10 5.2,9.6 L7,10.6 L8.8,9.6 C10.8,10 13,11.6 13,15.6Z" fill="#3B3F45"/><path d="M5.6,9.8 L7,15.6 L8.4,9.8Z" fill="#F4F4F4"/><path d="M6.6,10.6 H7.4 L7.8,14 L7,15.4 L6.2,14Z" fill="#C8202A"/><ellipse cx="7" cy="5.6" rx="3.1" ry="3.9" fill="#F3C79A"/><path d="M3.7,5.6 C3.2,1.8 5.4,0.6 7.2,0.6 C9.4,0.6 10.8,2.2 10.3,5.6 C9.8,3.6 8.8,3 7,3.2 C5.4,3 4.2,3.8 3.7,5.6Z" fill="#6B3A17"/></svg></i><span style="left:18px">admin</span></div><s class="t" style="left:159px"></s><div class="si" style="left:163px"><span class="cj" style="left:0">管理员</span></div><s style="left:209px"></s><div class="si" style="left:219px"><i><svg width="16" height="16" viewBox="0 0 16 16"><g transform="rotate(17 8 8)"><rect x="2.2" y="2.2" width="11.4" height="11.2" fill="#F2CC6C" stroke="#C79A3A" stroke-width=".7"/><path d="M2.2,11.4 H13.6 V13.4 H2.2Z" fill="#DDB050"/><path d="M4,7 H11.8 M4,9 H11.8 M4,10.8 H9.6" stroke="#A77B2E" stroke-width=".8"/></g><circle cx="8.8" cy="3.2" r="1.7" fill="#D8202A"/><circle cx="8.4" cy="2.8" r=".6" fill="#F58A8A"/></svg></i><span style="left:19px">T8HR学习帐套</span></div><s style="left:325px"></s><div class="si" style="left:335px"><i><svg width="16" height="16" viewBox="0 0 16 16"><rect x="0.6" y="1" width="12.8" height="12.6" fill="#fff" stroke="#C9C9D6" stroke-width=".6"/><rect x="0.6" y="1" width="12.8" height="3.4" fill="#E2574A"/><path d="M0.6,7.2 H13.4 M0.6,10.2 H13.4 M3.8,4.4 V13.6 M7,4.4 V13.6 M10.2,4.4 V13.6" stroke="#C7CCE4" stroke-width=".7"/><rect x="4.2" y="7.6" width="2.6" height="2.4" fill="none" stroke="#D8413A" stroke-width=".9"/><circle cx="11" cy="11.4" r="3.9" fill="#fff" stroke="#D83A34" stroke-width="1.2"/><path d="M11,9.4 V11.6 H9.4" stroke="#444" stroke-width=".9" fill="none"/></svg></i><span style="left:19px">2018年08月</span></div><s style="left:424px"></s><div class="si" style="left:434px"><i><svg width="17" height="16" viewBox="0 0 17 16"><g><path d="M0.4,10.4 C0.4,7.4 2.4,6.6 4.4,6.6 C6.4,6.6 7.6,7.6 7.8,10.4Z" fill="#86BE36"/><circle cx="4.3" cy="4" r="2.7" fill="#E08E4C"/><path d="M1.6,3.8 C1.6,1.4 3,0.8 4.3,0.8 C5.8,0.8 7,1.6 7,3.8 C6.2,2.6 5.2,2.6 4.3,2.6 C3.2,2.6 2.4,2.6 1.6,3.8Z" fill="#9A5424"/></g><g transform="translate(8.2,0)"><path d="M0.4,10.4 C0.4,7.4 2.4,6.6 4.4,6.6 C6.4,6.6 7.6,7.6 7.8,10.4Z" fill="#86BE36"/><circle cx="4.3" cy="4" r="2.7" fill="#E08E4C"/><path d="M1.6,3.8 C1.6,1.4 3,0.8 4.3,0.8 C5.8,0.8 7,1.6 7,3.8 C6.2,2.6 5.2,2.6 4.3,2.6 C3.2,2.6 2.4,2.6 1.6,3.8Z" fill="#9A5424"/></g><g transform="translate(4,4.6)"><path d="M-0.6,10.6 C-0.4,7.2 2,6.4 4.4,6.4 C6.8,6.4 9,7.2 9.2,10.6Z" fill="#79B52C" stroke="#A6D65E" stroke-width=".5"/><circle cx="4.3" cy="3.8" r="2.9" fill="#E6985A"/><path d="M1.4,3.8 C1.4,1.2 3,0.6 4.3,0.6 C5.8,0.6 7.2,1.4 7.2,3.8 C6.2,2.4 5.2,2.4 4.3,2.4 C3.2,2.4 2.4,2.4 1.4,3.8Z" fill="#8C4A1E"/></g></svg></i><span style="left:19px">在线: 1人</span></div><s style="left:511px"></s><div class="si" style="left:521px"><i><svg width="16" height="17" viewBox="0 0 16 17"><circle cx="3.2" cy="2.6" r="2" fill="#8C949C"/><circle cx="12.2" cy="2.6" r="2" fill="#8C949C"/><path d="M2.6,15.8 L4.4,13 M12.8,15.8 L11,13" stroke="#6E757C" stroke-width="1.3"/><circle cx="7.7" cy="8.6" r="6.4" fill="#9AA2AA" stroke="#656D76" stroke-width=".9"/><circle cx="7.7" cy="8.6" r="4.7" fill="#DCEEFB"/><path d="M7.7,5.2 V8.8 H10.6" stroke="#2C3640" stroke-width="1.1" fill="none"/></svg></i><span style="left:19px">预警</span></div><div class="si" style="left:978px"><i style="width:14px"><svg width="14" height="16" viewBox="0 0 14 16"><rect x="1" y="2.2" width="2" height="11.6" fill="#A9C6EC" stroke="#82A5DA" stroke-width=".8"/><path d="M13.2,2 V14 L3.6,8Z" fill="#A9C6EC" stroke="#82A5DA" stroke-width=".9"/></svg></i><span class="dis" style="left:18px">首笔</span></div><div class="si" style="left:1038px"><i style="width:12px"><svg width="12" height="16" viewBox="0 0 12 16"><path d="M11,2 V14 L1,8Z" fill="#A9C6EC" stroke="#82A5DA" stroke-width=".9"/></svg></i><span class="dis" style="left:18px">前一笔</span></div><div class="si" style="left:1107px"><span style="left:0">后一笔</span><i style="left:41px;width:14px"><svg width="14" height="16" viewBox="0 0 14 16"><defs><linearGradient id="nx" x1="0" x2="0" y1="0" y2="1"><stop offset="0" stop-color="#D6E6FA"/><stop offset="1" stop-color="#9DC0EE"/></linearGradient></defs><path d="M1,2 V14 L12.6,8Z" fill="url(#nx)" stroke="#4A80DA" stroke-width="1"/></svg></i></div><div class="si" style="left:1178px"><span style="left:0">末笔</span><i style="left:29px;width:14px"><svg width="14" height="16" viewBox="0 0 14 16"><defs><linearGradient id="ls" x1="0" x2="0" y1="0" y2="1"><stop offset="0" stop-color="#D6E6FA"/><stop offset="1" stop-color="#9DC0EE"/></linearGradient></defs><path d="M0.8,2 V14 L10.2,8Z" fill="url(#ls)" stroke="#4A80DA" stroke-width="1"/><rect x="10.8" y="2.2" width="2" height="11.6" fill="#C9DDF7" stroke="#4A80DA" stroke-width=".8"/></svg></i></div><div class="si" style="left:1237px"><span style="left:0">共 1489 条</span></div><div class="si" style="left:1300px"><span style="left:0">第 1 条</span></div></div></div></div></body></html>
